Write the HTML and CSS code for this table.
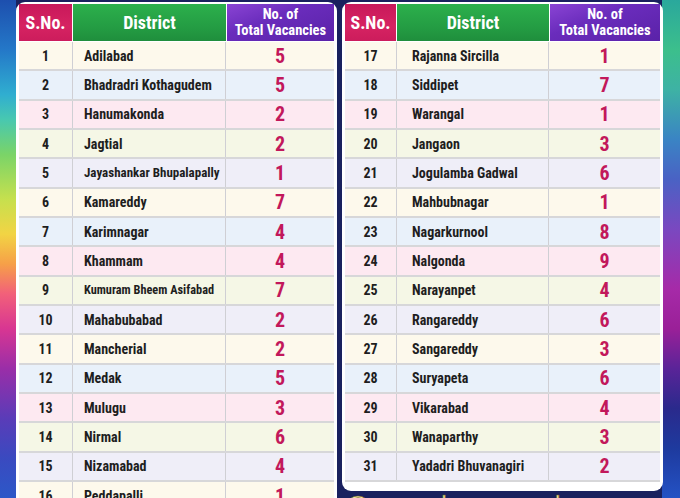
FILE: index.html
```html
<!DOCTYPE html>
<html lang="en">
<head>
<meta charset="utf-8">
<title>District Vacancies</title>
<link rel="stylesheet" href="styles.css">
</head>
<body>
<div class="page">
  <section class="card card-left">
    <div class="table">
      <div class="row head">
        <div class="hc hc-sno">S.No.</div>
        <div class="hc hc-dist">District</div>
        <div class="hc hc-vac">No. of<br>Total Vacancies</div>
      </div>
      <div class="row c1"><div class="sno">1</div><div class="dist">Adilabad</div><div class="vac">5</div></div>
      <div class="row c2"><div class="sno">2</div><div class="dist">Bhadradri Kothagudem</div><div class="vac">5</div></div>
      <div class="row c3"><div class="sno">3</div><div class="dist">Hanumakonda</div><div class="vac">2</div></div>
      <div class="row c4"><div class="sno">4</div><div class="dist">Jagtial</div><div class="vac">2</div></div>
      <div class="row c5"><div class="sno">5</div><div class="dist small">Jayashankar Bhupalapally</div><div class="vac">1</div></div>
      <div class="row c1"><div class="sno">6</div><div class="dist">Kamareddy</div><div class="vac">7</div></div>
      <div class="row c2"><div class="sno">7</div><div class="dist">Karimnagar</div><div class="vac">4</div></div>
      <div class="row c3"><div class="sno">8</div><div class="dist">Khammam</div><div class="vac">4</div></div>
      <div class="row c4"><div class="sno">9</div><div class="dist smaller">Kumuram Bheem Asifabad</div><div class="vac">7</div></div>
      <div class="row c5"><div class="sno">10</div><div class="dist">Mahabubabad</div><div class="vac">2</div></div>
      <div class="row c1"><div class="sno">11</div><div class="dist">Mancherial</div><div class="vac">2</div></div>
      <div class="row c2"><div class="sno">12</div><div class="dist">Medak</div><div class="vac">5</div></div>
      <div class="row c3"><div class="sno">13</div><div class="dist">Mulugu</div><div class="vac">3</div></div>
      <div class="row c4"><div class="sno">14</div><div class="dist">Nirmal</div><div class="vac">6</div></div>
      <div class="row c5"><div class="sno">15</div><div class="dist">Nizamabad</div><div class="vac">4</div></div>
      <div class="row c1"><div class="sno">16</div><div class="dist">Peddapalli</div><div class="vac">1</div></div>
    </div>
  </section>
  <div class="right-col">
    <section class="card card-right">
      <div class="table">
        <div class="row head">
          <div class="hc hc-sno">S.No.</div>
          <div class="hc hc-dist">District</div>
          <div class="hc hc-vac">No. of<br>Total Vacancies</div>
        </div>
        <div class="row c1"><div class="sno">17</div><div class="dist">Rajanna Sircilla</div><div class="vac">1</div></div>
        <div class="row c2"><div class="sno">18</div><div class="dist">Siddipet</div><div class="vac">7</div></div>
        <div class="row c3"><div class="sno">19</div><div class="dist">Warangal</div><div class="vac">1</div></div>
        <div class="row c4"><div class="sno">20</div><div class="dist">Jangaon</div><div class="vac">3</div></div>
        <div class="row c5"><div class="sno">21</div><div class="dist">Jogulamba Gadwal</div><div class="vac">6</div></div>
        <div class="row c1"><div class="sno">22</div><div class="dist">Mahbubnagar</div><div class="vac">1</div></div>
        <div class="row c2"><div class="sno">23</div><div class="dist">Nagarkurnool</div><div class="vac">8</div></div>
        <div class="row c3"><div class="sno">24</div><div class="dist">Nalgonda</div><div class="vac">9</div></div>
        <div class="row c4"><div class="sno">25</div><div class="dist">Narayanpet</div><div class="vac">4</div></div>
        <div class="row c5"><div class="sno">26</div><div class="dist">Rangareddy</div><div class="vac">6</div></div>
        <div class="row c1"><div class="sno">27</div><div class="dist">Sangareddy</div><div class="vac">3</div></div>
        <div class="row c2"><div class="sno">28</div><div class="dist">Suryapeta</div><div class="vac">6</div></div>
        <div class="row c3"><div class="sno">29</div><div class="dist">Vikarabad</div><div class="vac">4</div></div>
        <div class="row c4"><div class="sno">30</div><div class="dist">Wanaparthy</div><div class="vac">3</div></div>
        <div class="row c5"><div class="sno">31</div><div class="dist">Yadadri Bhuvanagiri</div><div class="vac">2</div></div>
      </div>
    </section>
    <div class="watermark">@mande_suresh</div>
  </div>
</div>
</body>
</html>
```
FILE: styles.css
```css
html, body {
  margin: 0;
  padding: 0;
}
body {
  width: 680px;
  height: 498px;
  overflow: hidden;
  font-family: "Roboto", "Liberation Sans", sans-serif;
  font-stretch: 75%;
  background:
    linear-gradient(to bottom,
      #1d4fae 0%, #2478c8 10%, #30aed0 19%, #48c8b0 24%, #7ad468 31%,
      #c6e04e 40%, #f2d444 47%, #f6a048 53%, #f2607a 59%, #d83692 66%,
      #9a2ea8 74%, #5a3cb8 84%, #3a4ac0 92%, #2c58c8 100%) left top / 16px 100% no-repeat,
    linear-gradient(to bottom,
      #2aa89c 0%, #3cbf8c 10%, #3eb2a4 18%, #3a84c4 28%, #4a62c4 36%,
      #7a48c0 46%, #a62aa8 58%, #9a2098 66%, #5a2498 74%, #2a2a8c 82%,
      #1e3a9e 90%, #2452c4 100%) right top / 18px 100% no-repeat,
    #19215e;
}
.page {
  display: flex;
  align-items: flex-start;
  gap: 5px;
  padding: 2px 0 0 16px;
}
.card {
  background: #ffffff;
  padding: 2px 3px 0 3px;
  box-sizing: border-box;
}
.card-left {
  width: 321px;
  height: 520px;
  border-radius: 9px 9px 0 0;
}
.right-col {
  display: flex;
  flex-direction: column;
}
.card-right {
  width: 321px;
  border-radius: 9px;
  padding-bottom: 9px;
}
.card-left .table { --cols: 53px 153px 1fr; }
.card-right .table { --cols: 51px 152px 1fr; }
.card-right .dist { padding-left: 15px; }

.row {
  display: grid;
  grid-template-columns: var(--cols);
  height: 29.33px;
  box-sizing: border-box;
  border-bottom: 2px solid #d7d7d9;
}
.row > div {
  display: flex;
  align-items: center;
  border-left: 1px solid #cfcfd4;
}
.row > div:first-child { border-left: 0; }

.row.head {
  height: 37px;
  border-bottom: 0;
  gap: 1px;
  margin-bottom: 1px;
}
.hc {
  color: #fff;
  font-weight: 700;
  justify-content: center;
  text-align: center;
  border-left: 0 !important;
}
.hc-sno {
  font-size: 18px;
  background: linear-gradient(to bottom, #c8185a, #d62362 60%, #cc1c5c);
}
.hc-dist {
  font-size: 18px;
  background: linear-gradient(to bottom, #2cb04c, #239a42 70%, #1f8e3c);
}
.hc-vac {
  font-size: 14.5px;
  line-height: 16px;
  background: linear-gradient(160deg, #8a44d4 0%, #6a2cbc 40%, #5a22a8 100%);
}

.c1 { background: #fdf9ec; }
.c2 { background: #e9f1fa; }
.c3 { background: #fde9f1; }
.c4 { background: #f5f7e6; }
.c5 { background: #efeef8; }

.sno {
  justify-content: center;
  font-size: 14px;
  font-weight: 700;
  color: #1e1e1e;
}
.dist {
  padding-left: 11px;
  font-size: 14px;
  font-weight: 700;
  color: #1e1e1e;
  white-space: nowrap;
}
.dist.small { font-size: 13px; }
.dist.smaller { font-size: 12.3px; }
.vac {
  justify-content: center;
  font-size: 20px;
  font-weight: 700;
  color: #c2185b;
}
.watermark {
  padding-left: 3px;
  font-family: "DejaVu Sans", sans-serif;
  font-stretch: normal;
  font-size: 25px;
  letter-spacing: 1.5px;
  line-height: 30px;
  color: #efe4a0;
  -webkit-text-stroke: 0.6px #6a5a20;
}
```
